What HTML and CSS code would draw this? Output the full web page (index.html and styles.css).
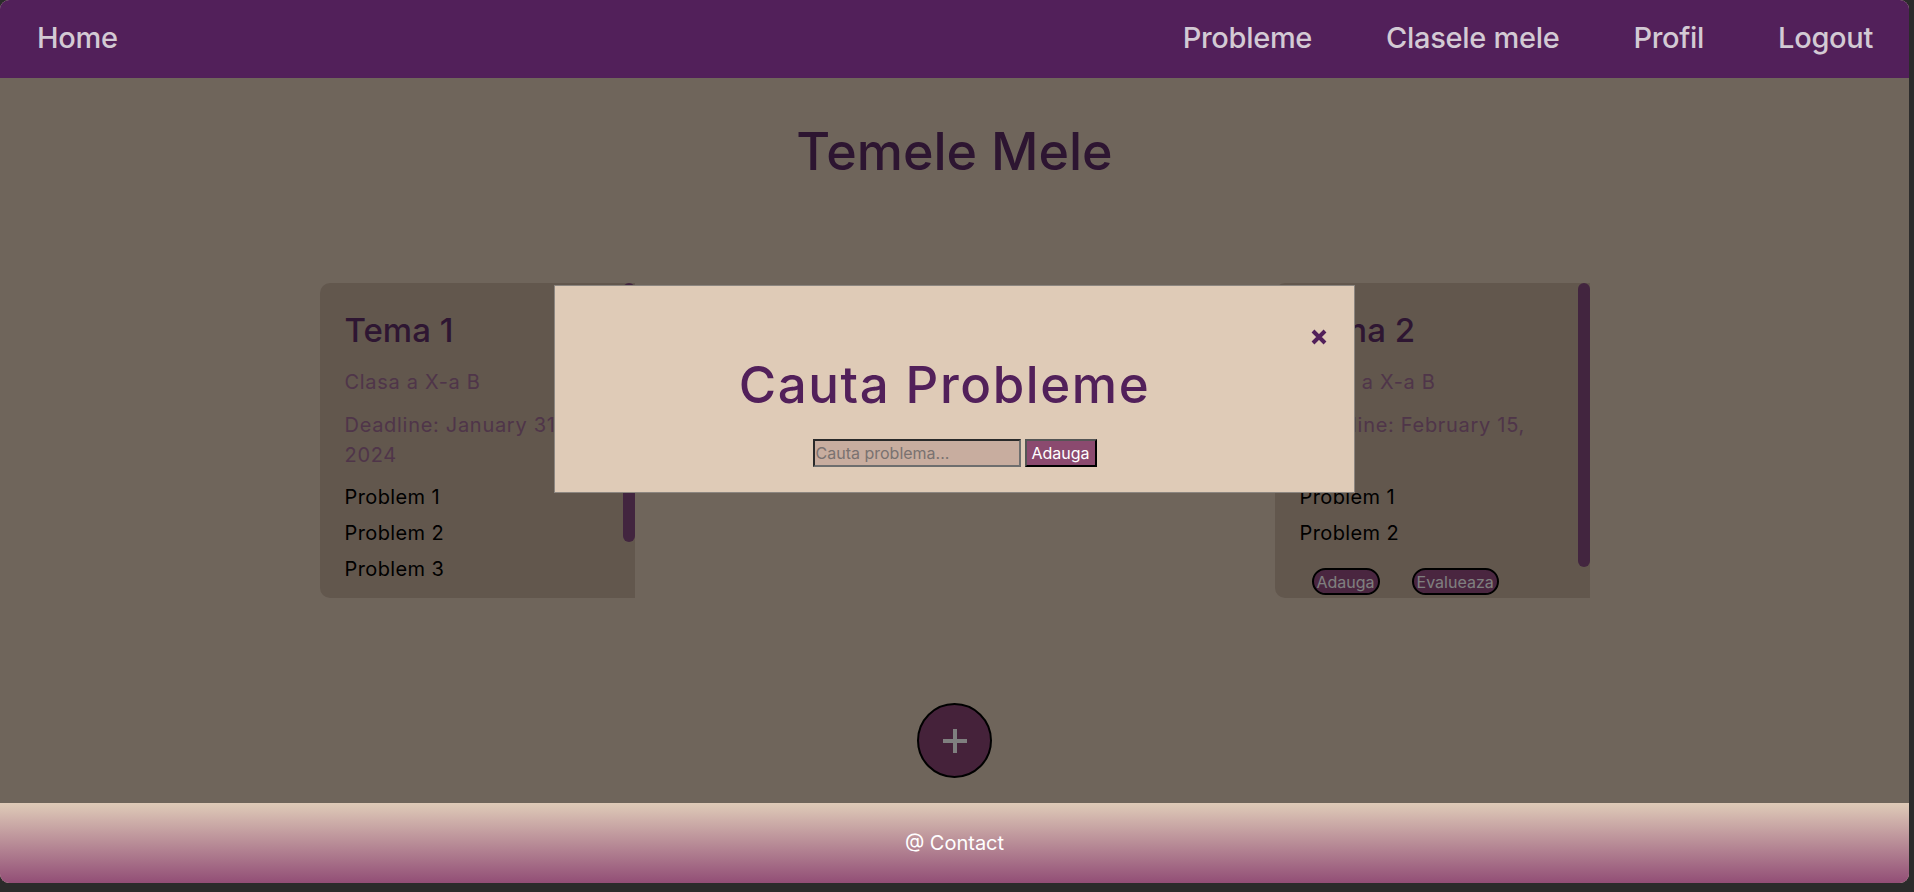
FILE: index.html
```html
<!DOCTYPE html>
<html lang="ro">
<head>
<meta charset="utf-8">
<title>Temele Mele</title>
<link rel="stylesheet" href="styles.css">
</head>
<body>
<div class="window">
  <nav class="navbar">
    <a class="nav-link" href="#">Home</a>
    <div class="nav-right">
      <a class="nav-link" href="#">Probleme</a>
      <a class="nav-link" href="#">Clasele mele</a>
      <a class="nav-link" href="#">Profil</a>
      <a class="nav-link" href="#">Logout</a>
    </div>
  </nav>
  <main class="main">
    <h1 class="page-title">Temele Mele</h1>
    <div class="cards">
      <div class="card">
        <h2 class="card-title">Tema 1</h2>
        <p class="card-meta first">Clasa a X-a B</p>
        <p class="card-meta">Deadline: January 31, 2024</p>
        <ul class="problems">
          <li>Problem 1</li>
          <li>Problem 2</li>
          <li>Problem 3</li>
        </ul>
        <div class="card-actions">
          <button class="pill">Adauga</button>
          <button class="pill">Evalueaza</button>
        </div>
        <span class="scroll-thumb" style="height: 259px"></span>
      </div>
      <div class="card">
        <h2 class="card-title">Tema 2</h2>
        <p class="card-meta first">Clasa a X-a B</p>
        <p class="card-meta">Deadline: February 15, 2024</p>
        <ul class="problems">
          <li>Problem 1</li>
          <li>Problem 2</li>
        </ul>
        <div class="card-actions">
          <button class="pill">Adauga</button>
          <button class="pill">Evalueaza</button>
        </div>
        <span class="scroll-thumb" style="height: 284px"></span>
      </div>
    </div>
    <div class="add-row">
      <button class="add-btn" aria-label="Adauga tema">
        <svg width="26" height="26" viewBox="0 0 26 26"><path d="M13 1v24M1 13h24" stroke="#ffffff" stroke-width="4" fill="none"/></svg>
      </button>
    </div>
    <div class="overlay">
      <div class="modal">
        <button class="close" aria-label="Inchide">
          <svg width="16" height="16" viewBox="0 0 16 16"><path d="M2 2L14 14M14 2L2 14" stroke="#52205a" stroke-width="4" fill="none"/></svg>
        </button>
        <h2 class="modal-title">Cauta Probleme</h2>
        <form class="search">
          <input class="search-input" type="text" placeholder="Cauta problema...">
          <button class="search-btn" type="button">Adauga</button>
        </form>
      </div>
    </div>
  </main>
  <footer class="footer">@ Contact</footer>
</div>
</body>
</html>
```

FILE: styles.css
```css
* { box-sizing: border-box; }

html, body {
  margin: 0;
  padding: 0;
  background: #2b2b2b;
  font-family: "Inter", "Noto Sans", sans-serif;
}

.window {
  width: 1909px;
  height: 883px;
  border-radius: 9px;
  overflow: hidden;
  background: #dfcbb7;
  display: flex;
  flex-direction: column;
}

.navbar {
  height: 78px;
  flex: 0 0 78px;
  background: #52205a;
  display: flex;
  align-items: center;
  justify-content: space-between;
  padding: 0 36px 3px 37px;
}

.nav-right {
  display: flex;
  gap: 74px;
}

.nav-link {
  color: #d3cad4;
  text-decoration: none;
  font-size: 29px;
  font-weight: 500;
  line-height: 29px;
  letter-spacing: -0.3px;
}

.main {
  flex: 1;
  position: relative;
  display: flex;
  flex-direction: column;
  align-items: center;
}

.page-title {
  margin: 43px 0 0;
  font-size: 52px;
  line-height: 62px;
  font-weight: 500;
  color: #5a2a62;
}

.cards {
  margin-top: 100px;
  width: 1270px;
  display: flex;
  justify-content: space-between;
}

.card {
  position: relative;
  width: 315px;
  height: 315px;
  overflow: hidden;
  background: #c4ae9b;
  border-radius: 10px 0 0 10px;
  padding: 27px 37px 37px 25px;
}

.scroll-thumb {
  position: absolute;
  top: 0;
  right: 0;
  width: 12px;
  background: #844a7e;
  border-radius: 6px;
}

.card-title {
  margin: 0;
  font-size: 33px;
  line-height: 40px;
  font-weight: 500;
  color: #5c2c64;
}

.card-meta {
  margin: 13px 0 0;
  font-size: 20px;
  line-height: 30px;
  letter-spacing: 0.7px;
  color: #9e6a92;
}

.card-meta.first { margin-top: 17px; }

.problems {
  list-style: none;
  margin: 9px 0 0;
  padding: 0;
}

.problems li {
  font-size: 20px;
  line-height: 36px;
  letter-spacing: 0.4px;
  color: #000000;
}

.card-actions {
  margin: 17px 0 0 12px;
  display: flex;
  gap: 32px;
}

.pill {
  height: 27px;
  padding: 0 3px;
  border: 2px solid #000000;
  border-radius: 14px;
  background: #944c80;
  color: #ffffff;
  font-family: inherit;
  font-size: 16px;
}

.add-row {
  margin-top: 105px;
}

.add-btn {
  width: 75px;
  height: 75px;
  border-radius: 50%;
  border: 2px solid #000000;
  background: #8a4474;
  display: flex;
  align-items: center;
  justify-content: center;
  padding: 0;
}

.overlay {
  position: absolute;
  inset: 0;
  background: rgba(0, 0, 0, 0.5);
  display: flex;
  flex-direction: column;
  align-items: center;
}

.modal {
  position: relative;
  margin-top: 207px;
  width: 801px;
  height: 208px;
  background: #dfcbb7;
  border: 1px solid #8c8680;
  display: flex;
  flex-direction: column;
  align-items: center;
  padding-top: 69px;
}

.close {
  position: absolute;
  top: 43px;
  right: 27px;
  width: 16px;
  height: 16px;
  padding: 0;
  border: 0;
  background: transparent;
  display: flex;
}

.modal-title {
  margin: 0 20px 0 0;
  font-size: 51px;
  line-height: 60px;
  font-weight: 500;
  letter-spacing: 1.6px;
  color: #52205a;
}

.search {
  margin-top: 24px;
  display: flex;
  gap: 4px;
}

.search-input {
  width: 208px;
  height: 28px;
  background: #c8ad9f;
  border: 2px solid;
  border-color: #2a2a2a #6e6e6e #6e6e6e #2a2a2a;
  padding: 0 1px;
  font-family: inherit;
  font-size: 16px;
  color: #333333;
}

.search-input::placeholder { color: #7a7270; }

.search-btn {
  width: 72px;
  height: 28px;
  background: #8b4a6f;
  border: 2px solid;
  border-color: #555555 #000000 #000000 #555555;
  color: #ffffff;
  font-family: inherit;
  font-size: 16px;
  padding: 0;
}

.footer {
  height: 80px;
  flex: 0 0 80px;
  background: linear-gradient(to bottom, #dfcbb8, #924e76);
  color: #ffffff;
  display: flex;
  align-items: center;
  justify-content: center;
  font-size: 20px;
}
```
